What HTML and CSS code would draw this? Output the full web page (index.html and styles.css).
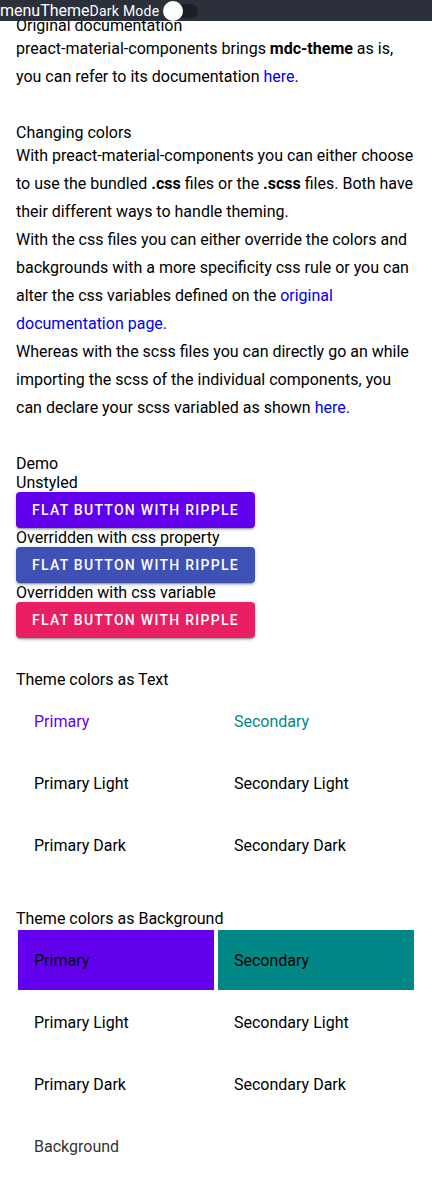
FILE: index.html
```html
<!DOCTYPE html>
<html lang="en">
<head>
<meta charset="utf-8">
<title>Theme</title>
<link rel="stylesheet" href="styles.css">
</head>
<body>
<header class="topbar">
  <span class="menu-icon">menu</span>
  <span class="title">Theme</span>
  <label class="dark-mode">
    <span class="dark-label">Dark Mode</span>
    <span class="switch"><span class="track"></span><span class="thumb"></span></span>
  </label>
</header>
<main class="page">
  <section class="section">
    <div class="heading">Original documentation</div>
    <p class="para">preact-material-components brings <strong>mdc-theme</strong> as is, you can refer to its documentation <a href="#">here</a>.</p>
  </section>
  <section class="section">
    <div class="heading">Changing colors</div>
    <p class="para">With preact-material-components you can either choose to use the bundled <strong>.css</strong> files or the <strong>.scss</strong> files. Both have their different ways to handle theming.<br>With the css files you can either override the colors and backgrounds with a more specificity css rule or you can alter the css variables defined on the <a href="#">original documentation page.</a><br>Whereas with the scss files you can directly go an while importing the scss of the individual components, you can declare your scss variabled as shown <a href="#">here.</a></p>
  </section>
  <section class="section">
    <div class="heading">Demo</div>
    <div class="label">Unstyled</div>
    <button class="btn btn-primary">Flat button with ripple</button>
    <div class="label">Overridden with css property</div>
    <button class="btn btn-indigo">Flat button with ripple</button>
    <div class="label">Overridden with css variable</div>
    <button class="btn btn-pink">Flat button with ripple</button>
  </section>
  <section class="section section-grid">
    <div class="heading">Theme colors as Text</div>
    <div class="swatches">
      <div class="cell text-primary">Primary</div>
      <div class="cell text-secondary">Secondary</div>
      <div class="cell">Primary Light</div>
      <div class="cell">Secondary Light</div>
      <div class="cell">Primary Dark</div>
      <div class="cell">Secondary Dark</div>
    </div>
  </section>
  <section class="section section-grid">
    <div class="heading">Theme colors as Background</div>
    <div class="swatches">
      <div class="cell bg-primary">Primary</div>
      <div class="cell bg-secondary">Secondary</div>
      <div class="cell">Primary Light</div>
      <div class="cell">Secondary Light</div>
      <div class="cell">Primary Dark</div>
      <div class="cell">Secondary Dark</div>
      <div class="cell cell-muted">Background</div>
    </div>
  </section>
</main>
</body>
</html>
```

FILE: styles.css
```css
* { box-sizing: border-box; }
html, body {
  margin: 0;
  padding: 0;
  background: #fff;
}
body {
  font-family: Roboto, "Liberation Sans", sans-serif;
  font-size: 16px;
  color: #000;
}
.topbar {
  position: fixed;
  top: 0;
  left: 0;
  right: 0;
  height: 21px;
  background: #2b303b;
  color: #fff;
  display: flex;
  align-items: center;
  z-index: 10;
}
.menu-icon, .title {
  font-size: 16px;
  line-height: 21px;
}
.dark-mode {
  display: flex;
  align-items: center;
  gap: 4px;
}
.dark-label {
  font-size: 14px;
  letter-spacing: 0.25px;
  line-height: 21px;
  padding-top: 1px;
}
.switch {
  position: relative;
  width: 35px;
  height: 20px;
  display: block;
}
.track {
  position: absolute;
  left: 1px;
  top: 3px;
  width: 34px;
  height: 14px;
  border-radius: 7px;
  background: #1c1f26;
}
.thumb {
  position: absolute;
  left: 0;
  top: 0;
  width: 20px;
  height: 20px;
  border-radius: 50%;
  background: #fff;
}
.page {
  padding: 16px 16px 0;
}
.section {
  margin-bottom: 32px;
}
.section-grid {
  margin-bottom: 34px;
}
.heading {
  line-height: normal;
}
.para {
  margin: 0;
  line-height: 28px;
}
.para a {
  color: #0000ee;
  text-decoration: none;
}
.label {
  line-height: normal;
}
.btn {
  display: flex;
  align-items: center;
  height: 36px;
  padding: 0 16px;
  border: 0;
  border-radius: 4px;
  color: #fff;
  font-family: Roboto, "Liberation Sans", sans-serif;
  font-size: 14px;
  font-weight: 500;
  letter-spacing: 1.27px;
  text-transform: uppercase;
  box-shadow: 0 3px 1px -2px rgba(0,0,0,.2), 0 2px 2px 0 rgba(0,0,0,.14), 0 1px 5px 0 rgba(0,0,0,.12);
}
.btn-primary { background: #6200ee; }
.btn-indigo { background: #3f51b5; }
.btn-pink { background: #e91e63; }
.swatches {
  display: grid;
  grid-template-columns: 1fr 1fr;
  gap: 2px 4px;
  margin: 2px;
}
.cell {
  height: 60px;
  display: flex;
  align-items: center;
  padding-left: 16px;
}
.text-primary { color: #6200ee; }
.text-secondary { color: #018786; }
.bg-primary { background: #6200ee; }
.bg-secondary { background: #018786; }
.cell-muted { color: #333; }
```
